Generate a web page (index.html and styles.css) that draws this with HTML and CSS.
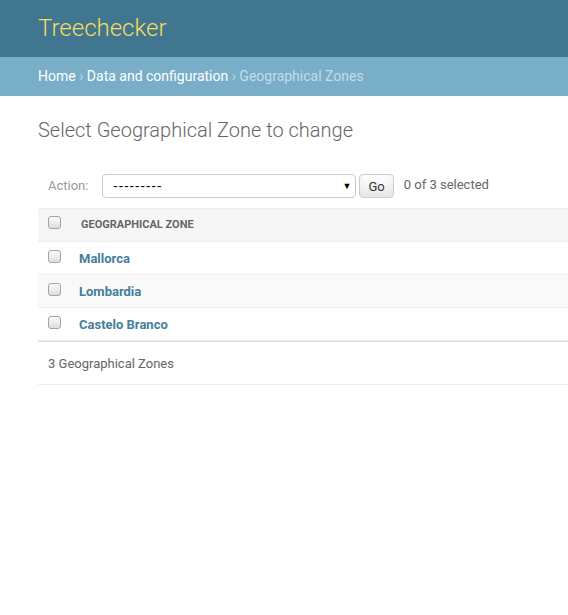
FILE: index.html
```html
<!DOCTYPE html>
<html lang="en">
<head>
<meta charset="utf-8">
<title>Select Geographical Zone to change</title>
<link rel="stylesheet" href="styles.css">
</head>
<body>
<div class="header">
  <h1 class="branding">Treechecker</h1>
</div>
<div class="breadcrumbs">
  <a href="#">Home</a> › <a href="#">Data and configuration</a> › Geographical Zones
</div>
<div class="content">
  <h1 class="title">Select Geographical Zone to change</h1>
  <div class="changelist">
    <div class="actions">
      <label class="action-label">Action:
        <span class="select-wrap">
          <select class="action-select">
            <option>---------</option>
          </select>
          <span class="select-arrow">▼</span>
        </span>
      </label>
      <button class="go-button" type="button">Go</button>
      <span class="action-counter">0 of 3 selected</span>
    </div>
    <table class="result-list">
      <thead>
        <tr>
          <th class="check-col"><input type="checkbox" class="cb"></th>
          <th class="name-col">Geographical zone</th>
        </tr>
      </thead>
      <tbody>
        <tr class="row1">
          <td class="check-col"><input type="checkbox" class="cb"></td>
          <td><a href="#">Mallorca</a></td>
        </tr>
        <tr class="row2">
          <td class="check-col"><input type="checkbox" class="cb"></td>
          <td><a href="#">Lombardia</a></td>
        </tr>
        <tr class="row1">
          <td class="check-col"><input type="checkbox" class="cb"></td>
          <td><a href="#">Castelo Branco</a></td>
        </tr>
      </tbody>
    </table>
    <p class="paginator">3 Geographical Zones</p>
  </div>
</div>
</body>
</html>
```
FILE: styles.css
```css
html {
  overflow-x: hidden;
}
body {
  margin: 0;
  font-family: Roboto, "Liberation Sans", sans-serif;
  font-size: 14px;
  color: #333;
  background: #fff;
}
.header {
  height: 57px;
  padding: 0 38px;
  background: #417690;
  display: flex;
  align-items: center;
}
.branding {
  margin: -1px 0 0;
  font-size: 24px;
  font-weight: 300;
  color: #f5dd5d;
  line-height: 30px;
}
.breadcrumbs {
  background: #79aec8;
  padding: 10px 38px;
  font-size: 14px;
  line-height: 19px;
  color: #c4dce8;
}
.breadcrumbs a {
  color: #fff;
  text-decoration: none;
}
.content {
  padding: 20px 0 20px 38px;
}
.title {
  margin: 0 0 20px;
  font-size: 20px;
  font-weight: 300;
  line-height: 28px;
  color: #666;
}
.actions {
  padding: 10px;
  line-height: 24px;
  color: #999;
  font-size: 13px;
  display: flex;
  align-items: flex-start;
}
.action-label {
  display: flex;
  align-items: flex-start;
}
.select-wrap {
  position: relative;
  display: block;
  margin-left: 14px;
}
.action-select {
  display: block;
  height: 24px;
  width: 254px;
  margin: 0;
  padding: 0 0 0 10px;
  border: 1px solid #ccc;
  border-radius: 4px;
  background: #fff;
  color: #000;
  font-family: Roboto, "Liberation Sans", sans-serif;
  font-size: 14px;
  letter-spacing: 1.6px;
  -webkit-appearance: none;
  appearance: none;
}
.select-arrow {
  position: absolute;
  right: 5px;
  top: 0;
  font-size: 9px;
  line-height: 24px;
  color: #000;
  pointer-events: none;
}
.go-button {
  margin-left: 3px;
  height: 24px;
  padding: 4px 8px;
  font-family: Roboto, "Liberation Sans", sans-serif;
  font-size: 13px;
  line-height: 1;
  color: #333;
  border: 1px solid #ccc;
  border-radius: 4px;
  background: #fff;
  box-shadow: 0 -15px 20px -10px rgba(0, 0, 0, 0.15) inset;
}
.action-counter {
  margin-left: 10px;
  margin-top: -1px;
  color: #666;
}
.result-list {
  width: 100%;
  border-collapse: collapse;
}
.result-list thead th {
  background: #f6f6f6;
  border-top: 1px solid #eee;
  border-bottom: 1px solid #eee;
  color: #666;
  font-size: 11px;
  font-weight: 700;
  text-transform: uppercase;
  text-align: left;
  padding: 8px 10px;
  line-height: 16px;
  white-space: nowrap;
  vertical-align: top;
}
.result-list td {
  padding: 9px 8px 7px;
  font-size: 13px;
  line-height: 16px;
  border-bottom: 1px solid #eee;
  vertical-align: top;
}
.result-list th.check-col,
.result-list td.check-col {
  width: 13px;
  padding-left: 10px;
  padding-right: 10px;
}
.result-list td.check-col {
  padding-top: 8px;
  padding-bottom: 8px;
}
.result-list thead th.check-col {
  padding-top: 7px;
}
.row2 td {
  background: #f9f9f9;
}
.cb {
  -webkit-appearance: none;
  appearance: none;
  display: block;
  margin: 0;
  width: 13px;
  height: 13px;
  border: 1px solid #a3a3a3;
  border-radius: 3px;
  background: linear-gradient(#fbfbfb, #dedede);
}
.result-list a {
  color: #447e9b;
  font-weight: 700;
  text-decoration: none;
}
.paginator {
  margin: 0;
  padding: 11px 10px 9px;
  font-size: 13px;
  line-height: 22px;
  color: #666;
  border-top: 1px solid #ddd;
  border-bottom: 1px solid #eee;
}
```
